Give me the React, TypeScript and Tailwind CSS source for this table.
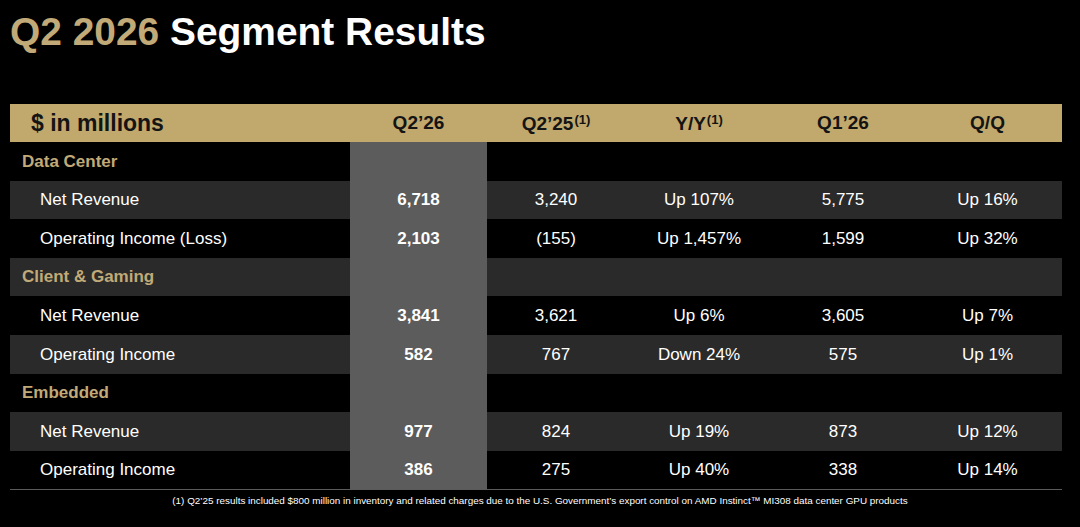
import React from 'react'

type Row =
  | { kind: 'section'; label: string }
  | { kind: 'item'; label: string; values: string[] }

const rows: Row[] = [
  { kind: 'section', label: 'Data Center' },
  { kind: 'item', label: 'Net Revenue', values: ['6,718', '3,240', 'Up 107%', '5,775', 'Up 16%'] },
  { kind: 'item', label: 'Operating Income (Loss)', values: ['2,103', '(155)', 'Up 1,457%', '1,599', 'Up 32%'] },
  { kind: 'section', label: 'Client & Gaming' },
  { kind: 'item', label: 'Net Revenue', values: ['3,841', '3,621', 'Up 6%', '3,605', 'Up 7%'] },
  { kind: 'item', label: 'Operating Income', values: ['582', '767', 'Down 24%', '575', 'Up 1%'] },
  { kind: 'section', label: 'Embedded' },
  { kind: 'item', label: 'Net Revenue', values: ['977', '824', 'Up 19%', '873', 'Up 12%'] },
  { kind: 'item', label: 'Operating Income', values: ['386', '275', 'Up 40%', '338', 'Up 14%'] },
]

const colWidths = ['w-[137px]', 'w-[138px]', 'w-[148px]', 'w-[140px]', 'w-[149px]']

const Sup: React.FC = () => (
  <span className="inline-block align-top text-[13px] leading-none relative -top-[1px] ml-[1px]">(1)</span>
)

const App: React.FC = () => {
  return (
    <div className="w-[1080px] h-[527px] bg-black overflow-hidden font-['Liberation_Sans',Arial,sans-serif]">
      {/* Title */}
      <h1 className="pl-[10px] pt-[6px] text-[38.9px] leading-[52px] font-bold text-white">
        <span className="text-[#c1aa78]">Q2 2026</span> Segment Results
      </h1>

      <div className="mt-[46px] mx-[10px] w-[1052px]">
        {/* Header */}
        <div className="flex h-[38px] items-center bg-[#c1a86c] text-[#141414] font-bold">
          <div className="w-[340px] pl-[21px] text-[23px]">$ in millions</div>
          <div className={`${colWidths[0]} text-center text-[19px]`}>Q2’26</div>
          <div className={`${colWidths[1]} text-center text-[19px] leading-none`}>
            Q2’25<Sup />
          </div>
          <div className={`${colWidths[2]} text-center text-[19px] leading-none`}>
            Y/Y<Sup />
          </div>
          <div className={`${colWidths[3]} text-center text-[19px]`}>Q1’26</div>
          <div className={`${colWidths[4]} text-center text-[19px]`}>Q/Q</div>
        </div>

        {/* Body */}
        <div className="border-b border-[#5a5a5a]">
          {rows.map((row, i) => {
            const bg = i % 2 === 1 ? 'bg-[#2a2a2a]' : 'bg-black'
            return (
              <div key={i} className={`flex h-[38.6px] items-center ${bg}`}>
                {row.kind === 'section' ? (
                  <>
                    <div className="w-[340px] pl-[12px] text-[17px] font-bold text-[#c1aa78]">{row.label}</div>
                    <div className={`${colWidths[0]} h-full bg-[#5c5c5c]`} />
                  </>
                ) : (
                  <>
                    <div className="w-[340px] pl-[30px] text-[17px] text-white">{row.label}</div>
                    <div className={`${colWidths[0]} h-full flex items-center justify-center bg-[#5c5c5c] text-[17px] font-bold text-white`}>
                      {row.values[0]}
                    </div>
                    {row.values.slice(1).map((v, j) => (
                      <div key={j} className={`${colWidths[j + 1]} text-center text-[17px] text-white`}>
                        {v}
                      </div>
                    ))}
                  </>
                )}
              </div>
            )
          })}
        </div>
      </div>

      {/* Footnote */}
      <p className="mt-[4px] text-center text-[9.9px] text-white">
        (1) Q2’25 results included $800 million in inventory and related charges due to the U.S. Government’s export control on AMD Instinct™ MI308 data center GPU products
      </p>
    </div>
  )
}

export default App
